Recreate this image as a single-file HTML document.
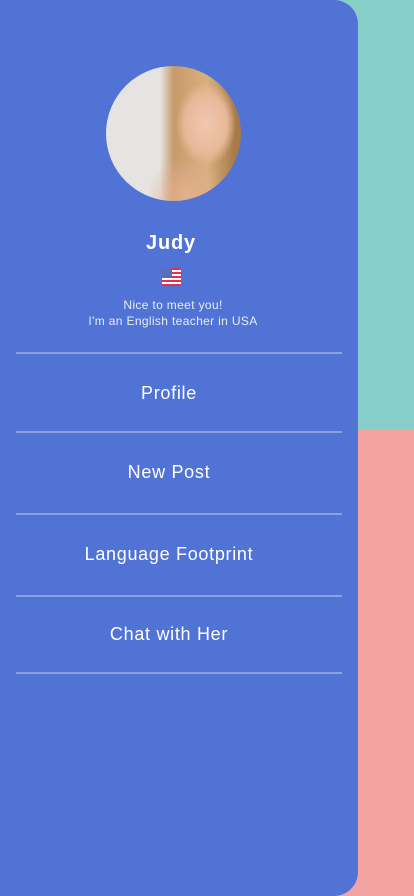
<!DOCTYPE html>
<html><head><meta charset="utf-8"><style>
html,body{margin:0;padding:0;width:414px;height:896px;overflow:hidden;font-family:"Liberation Sans",sans-serif}
.bgt{position:absolute;left:0;top:0;width:414px;height:430px;background:#88cfcb}
.bgb{position:absolute;left:0;top:430px;width:414px;height:466px;background:#f4a3a3}
.panel{position:absolute;left:0;top:0;width:358px;height:896px;background:#5073d5;border-radius:0 24px 24px 0;color:#fff}
.av{position:absolute;left:106px;top:66px;width:135px;height:135px;border-radius:50%;overflow:hidden;background:radial-gradient(ellipse 30px 42px at 100px 58px,#f0c8b0 0%,#e8b898 70%,transparent 100%),radial-gradient(ellipse 40px 40px at 80px 130px,#e4b090 0%,transparent 100%),linear-gradient(90deg,#e6e4e2 0%,#e6e4e2 40%,#c89a6a 50%,#d8b080 75%,#a87a4a 95%)}
.name{position:absolute;top:232px;left:0;width:342px;text-align:center;font-size:20px;font-weight:bold;letter-spacing:0.8px}
.flag{position:absolute;left:162px;top:268px;width:19px;height:18px;border-radius:2px;background:repeating-linear-gradient(180deg,#e0324a 0 2px,#fff 2px 4px)}
.flag:before{content:"";position:absolute;left:0;top:0;width:10px;height:9px;background:#5a6fb8}
.bio{position:absolute;top:297px;left:0;width:346px;text-align:center;font-size:12px;line-height:16px;color:#e8ecf8;letter-spacing:0.35px}
.line{position:absolute;left:16px;width:326px;height:2px;background:#8aa0e0}
.item{position:absolute;left:0;width:338px;text-align:center;font-size:18px;letter-spacing:0.7px}
</style></head><body>
<div class="bgt"></div><div class="bgb"></div>
<div class="panel">
<div class="av"></div>
<div class="name">Judy</div>
<div class="flag"></div>
<div class="bio">Nice to meet you!<br>I'm an English teacher in USA</div>
<div class="line" style="top:352px"></div>
<div class="item" style="top:383px">Profile</div>
<div class="line" style="top:431px"></div>
<div class="item" style="top:462px">New Post</div>
<div class="line" style="top:513px"></div>
<div class="item" style="top:544px">Language Footprint</div>
<div class="line" style="top:595px"></div>
<div class="item" style="top:624px">Chat with Her</div>
<div class="line" style="top:672px"></div>
</div>
</body></html>
